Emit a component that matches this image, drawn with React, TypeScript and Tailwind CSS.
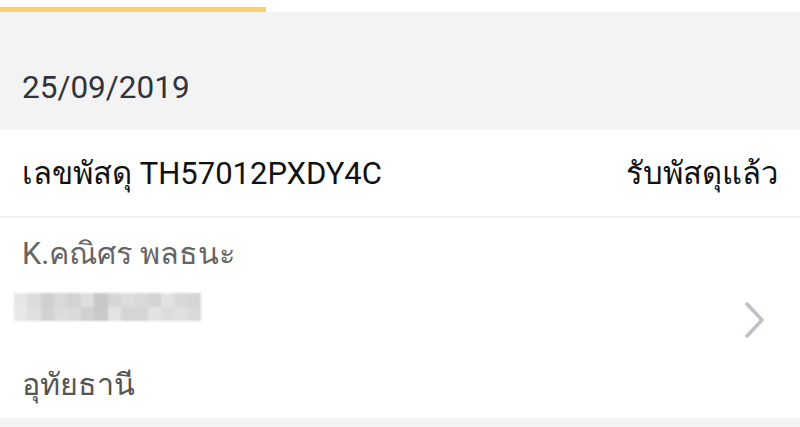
export default function App() {
  const mosaic = [
    ['#e6e6e6', '#dcdcdc', '#cfcfcf', '#d9d9d9', '#d2d2d2', '#dedede', '#c8c8c8', '#d6d6d6', '#dcdcdc', '#d9d9d9', '#d4d4d4', '#e3e3e3', '#d8d8d8', '#d5d5d5'],
    ['#e8e8e8', '#e0e0e0', '#d2d2d2', '#dcdcdc', '#dadada', '#d1d1d1', '#c9c9c9', '#e3e3e3', '#d5d5d5', '#d5d5d5', '#e2e2e2', '#dddddd', '#e0e0e0', '#dadada'],
  ];

  return (
    <div className="w-[800px] h-[427px] overflow-hidden bg-white font-['Roboto','Noto_Sans',sans-serif]">
      <div className="h-[12px] pt-[7px]">
        <div className="h-[5px] w-[266px] bg-[#f6d06b]" />
      </div>
      <div className="h-[118px] bg-[#f3f3f3] px-[22px] pt-[58px]">
        <p className="text-[31.5px] leading-[36px] text-[#32323c]">25/09/2019</p>
      </div>
      <div className="h-[88px] flex items-center justify-between px-[22px] pt-[3px] border-b-2 border-[#f1f1f1]">
        <span className="text-[31px] text-[#111]">เลขพัสดุ TH57012PXDY4C</span>
        <span className="text-[31px] text-[#111]">รับพัสดุแล้ว</span>
      </div>
      <div className="h-[200px] flex items-center justify-between pl-[14px] pr-[34px]">
        <div className="flex flex-col pt-[2px]">
          <span className="pl-[8px] text-[30.5px] leading-[36px] text-[#666]">K.คณิศร พลธนะ</span>
          <div className="mt-[21px] flex flex-col w-[187px] blur-[1px]">
            {mosaic.map((row, i) => (
              <div key={i} className="flex">
                {row.map((c, j) => (
                  <div key={j} className="h-[14px] w-[13.4px]" style={{ backgroundColor: c }} />
                ))}
              </div>
            ))}
          </div>
          <span className="mt-[46px] pl-[8px] text-[30.5px] leading-[36px] text-[#555]">อุทัยธานี</span>
        </div>
        <svg width="22" height="38" viewBox="0 0 22 38" fill="none" className="mt-[4px]">
          <path d="M3 3 L18 19 L3 35" stroke="#bcc0c7" strokeWidth="3.5" strokeLinecap="round" strokeLinejoin="round" />
        </svg>
      </div>
      <div className="h-[9px] bg-[#f3f3f3]" />
    </div>
  );
}
